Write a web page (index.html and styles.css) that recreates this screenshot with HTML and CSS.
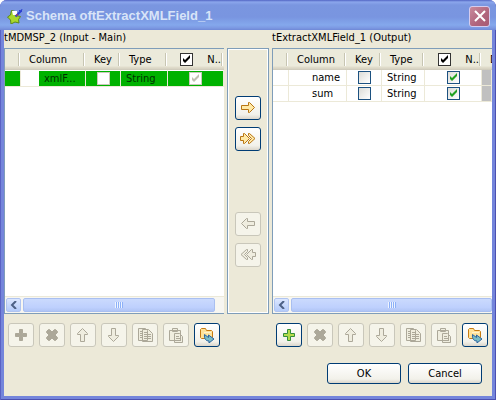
FILE: index.html
```html
<!DOCTYPE html>
<html lang="en">
<head>
<meta charset="utf-8">
<title>Schema oftExtractXMLField_1</title>
<link rel="stylesheet" href="styles.css">
</head>
<body>
<svg class="defs" aria-hidden="true">
  <symbol id="tick" viewBox="0 0 13 13"><path d="M3 5l2 2 5-5v3L5 10 3 8z"/></symbol>
  <symbol id="plus" viewBox="0 0 14 14"><path d="M5.500 1.500h3v4h4v3h-4v4h-3v-4h-4v-3h4z"/></symbol>
  <symbol id="cross" viewBox="0 0 14 14"><path d="M1.500 3.500l2-2h1l2.500 2.500 2.500-2.500h1l2 2v1l-2.500 2.500 2.500 2.500v1l-2 2h-1l-2.500-2.500-2.500 2.500h-1l-2-2v-1l2.500-2.500-2.500-2.500z"/></symbol>
  <symbol id="right" viewBox="0 0 16 14"><path d="M1.500 4.500h7v-3h1l5 5-5 5h-1v-3h-7z"/></symbol>
  <symbol id="double" viewBox="0 0 16 14"><path d="M8.500 1.500h1l5.500 5-5.500 5h-1v-2l3-3-3-3z M.5 4.500h3v-3h1l5 5-5 5h-1v-3h-3z"/></symbol>
  <symbol id="up" viewBox="0 0 14 16"><path d="M4.500 14.500v-7h-3v-1l5-5 5 5v1h-3v7z"/></symbol>
  <symbol id="copy" viewBox="0 0 16 16"><path class="sheet" d="M1.500 1.500h7l2 2v10h-9z M5.500 2.500h6l4 4v8h-10z"/><path class="rule" d="M7 5.500h4M7 7.500h7M7 9.500h7M7 11.500h7M3 4.500h2M3 6.500h2M3 8.500h2M3 10.500h2"/></symbol>
  <symbol id="paste" viewBox="0 0 16 16"><path class="sheet" d="M1.500 3.500h11v10h-11z M4.500 1.500h5v3h-5z M6.500 6.500h5l3 3v6h-8z"/><path class="rule" d="M8 9.500h3M8 11.500h5M8 13.500h5"/></symbol>
  <symbol id="folder" viewBox="0 0 16 16"><path d="M1.500 10.500v-8l1-1h4l1 2h5l1 1v6l-1 1h-10z" fill="#ffe39a" stroke="#c77b12"/><path d="M5 5.500h7" stroke="#fff4cf"/><path d="M5.500 7.500l4 3V8l5.500 4-5 4v-2c-3 0-5-2-4.500-6.500z" fill="#79bcc5" stroke="#2b65a0"/></symbol>
</svg>
<main class="window">
  <header class="titlebar">
    <svg class="logo" viewBox="0 0 16 16" aria-hidden="true"><path d="M4.500 2.500l4 1v4l5 1-2 3 .5 3.500-4-1-4 2-.5-4-3-3 3-2z" fill="#a9d82c" stroke="#5c8a18"/><path d="M5 3h5v4H6z" fill="#fff"/><path d="M8.500 8.500l6-6" stroke="#2b3fd0" stroke-width="2"/><path d="M12 2l2 2 1-3" stroke="#2b3fd0"/><path d="M9 7h2" stroke="#d8402a"/></svg>
    <h1>Schema oftExtractXMLField_1</h1>
    <button class="close" aria-label="Close"><svg viewBox="0 0 12 12"><path d="M1 1l10 10M11 1L1 11"/></svg></button>
  </header>
  <div class="content">
    <div class="panes">
      <section class="pane">
        <h2>tMDMSP_2 (Input - Main)</h2>
        <div class="grid">
          <table class="input">
            <colgroup><col class="c-gap"><col class="c-name"><col class="c-key"><col class="c-type"><col class="c-null"></colgroup>
            <thead><tr><th></th><th>Column</th><th>Key</th><th>Type</th><th><span class="nullable"><label class="check plain"><input type="checkbox" checked aria-label="Nullable for all"><svg><use href="#tick"/></svg></label>N..</span></th></tr></thead>
            <tbody><tr><td></td><td class="name swatch">xmlF...</td><td><label class="check off"><input type="checkbox" disabled aria-label="Key"></label></td><td class="type">String</td><td><label class="check off"><input type="checkbox" checked disabled aria-label="Nullable"><svg><use href="#tick"/></svg></label></td></tr></tbody>
          </table>
          <div class="scroll"><button aria-label="Scroll left"><svg viewBox="0 0 8 8"><path d="M6 0L2 4l4 4"/></svg></button><div class="thumb"><i></i></div><div class="track"></div></div>
        </div>
      </section>
      <div class="transfer">
        <button class="tool" aria-label="Copy to output"><svg class="gold wide"><use href="#right"/></svg></button>
        <button class="tool" aria-label="Copy all to output"><svg class="gold wide"><use href="#double"/></svg></button>
        <button class="tool back" disabled aria-label="Copy to input"><svg class="wide flip"><use href="#right"/></svg></button>
        <button class="tool" disabled aria-label="Copy all to input"><svg class="wide flip"><use href="#double"/></svg></button>
      </div>
      <section class="pane">
        <h2>tExtractXMLField_1 (Output)</h2>
        <div class="grid">
          <table class="output">
            <colgroup><col class="c-gap"><col class="c-name"><col class="c-key"><col class="c-type"><col class="c-null"><col></colgroup>
            <thead><tr><th></th><th>Column</th><th>Key</th><th>Type</th><th><span class="nullable"><label class="check plain"><input type="checkbox" checked aria-label="Nullable for all"><svg><use href="#tick"/></svg></label>N..</span></th><th>D</th></tr></thead>
            <tbody>
              <tr><td></td><td class="name">name</td><td><label class="check"><input type="checkbox" aria-label="Key name"></label></td><td class="type">String</td><td><label class="check"><input type="checkbox" checked aria-label="Nullable name"><svg><use href="#tick"/></svg></label></td><td class="grey"></td></tr>
              <tr><td></td><td class="name">sum</td><td><label class="check"><input type="checkbox" aria-label="Key sum"></label></td><td class="type">String</td><td><label class="check"><input type="checkbox" checked aria-label="Nullable sum"><svg><use href="#tick"/></svg></label></td><td class="grey"></td></tr>
            </tbody>
          </table>
          <div class="scroll"><button aria-label="Scroll left"><svg viewBox="0 0 8 8"><path d="M6 0L2 4l4 4"/></svg></button><div class="thumb"><i></i></div></div>
        </div>
      </section>
    </div>
    <div class="toolbars">
      <div class="toolbar">
        <button class="tool" disabled aria-label="Add"><svg class="solid"><use href="#plus"/></svg></button>
        <button class="tool" disabled aria-label="Remove"><svg class="solid"><use href="#cross"/></svg></button>
        <button class="tool" disabled aria-label="Move up"><svg class="tall"><use href="#up"/></svg></button>
        <button class="tool" disabled aria-label="Move down"><svg class="tall down"><use href="#up"/></svg></button>
        <button class="tool" disabled aria-label="Copy"><svg class="big"><use href="#copy"/></svg></button>
        <button class="tool" disabled aria-label="Paste"><svg class="big"><use href="#paste"/></svg></button>
        <button class="tool" aria-label="Import"><svg class="big"><use href="#folder"/></svg></button>
      </div>
      <div class="toolbar">
        <button class="tool" aria-label="Add"><svg class="green"><use href="#plus"/></svg></button>
        <button class="tool" disabled aria-label="Remove"><svg class="solid"><use href="#cross"/></svg></button>
        <button class="tool" disabled aria-label="Move up"><svg class="tall"><use href="#up"/></svg></button>
        <button class="tool" disabled aria-label="Move down"><svg class="tall down"><use href="#up"/></svg></button>
        <button class="tool" disabled aria-label="Copy"><svg class="big"><use href="#copy"/></svg></button>
        <button class="tool" disabled aria-label="Paste"><svg class="big"><use href="#paste"/></svg></button>
        <button class="tool" aria-label="Import"><svg class="big"><use href="#folder"/></svg></button>
      </div>
    </div>
    <footer><button class="action">OK</button><button class="action">Cancel</button></footer>
  </div>
</main>
</body>
</html>
```
FILE: styles.css
```css
* { box-sizing: border-box; }
body { margin: 0; background: #fff; color: #000; font: 11px/14px "DejaVu Sans Condensed", "Noto Sans", sans-serif; }
button { font: inherit; color: inherit; padding: 0; }
svg { display: block; }
.defs { display: none; }
.window { min-height: 100vh; display: flex; flex-direction: column; background: #7485db; border-radius: 7px 7px 0 0; box-shadow: inset 1px 0 #5a62c4, inset -1px -1px #4c50b0; overflow: hidden; }

.titlebar { height: 30px; flex: none; display: flex; align-items: center; gap: 3px; padding: 2px 6px 0 7px; background: linear-gradient(#5265c4 0, #8ba6ec 2px, #7a96e0 5px, #7995e0 17px, #84a8ec 25px, #7c98e2 28px, #6f88d6 30px); }
.titlebar h1 { flex: 1; margin: 0; font: bold 13px/18px "Liberation Sans", sans-serif; color: #d8e4f8; }
.logo { width: 16px; height: 16px; fill: none; }
.close { width: 21px; height: 21px; display: grid; place-items: center; border: 1px solid #d5ccee; border-radius: 3px; background: linear-gradient(135deg, #c98a9c, #b0647c 60%, #a85a74); }
.close svg { width: 12px; height: 12px; stroke: #fff; stroke-width: 2; }

.content { flex: 1; margin: 0 4px 4px; background: #ece9d8; display: flex; flex-direction: column; }
.panes { display: grid; grid-template-columns: 1fr 42px 1fr; column-gap: 3px; }
.pane { min-width: 0; display: flex; flex-direction: column; }
.pane h2 { margin: 0; height: 18px; font: inherit; line-height: 16px; white-space: nowrap; }
.grid { height: 266px; display: flex; flex-direction: column; justify-content: space-between; background: #fff; border: 1px solid #7f9db9; border-right: 0; overflow: hidden; }
table { width: 100%; table-layout: fixed; border-collapse: separate; border-spacing: 0; }
th, td { padding: 0; font-weight: normal; white-space: nowrap; overflow: hidden; }
th { height: 21px; padding-left: 8px; text-align: left; background: linear-gradient(#ebeadb 17px, #e2decd 18px, #d6d2c2 20px, #cbc7b8); position: relative; }
th:not(:last-child)::after, .input th:last-child::after { content: ""; position: absolute; right: 1px; top: 4px; width: 2px; height: 13px; background: linear-gradient(90deg, #c7c5b2 50%, #fff 50%); }
td { height: 16px; border-right: 1px solid #ece9d8; border-bottom: 1px solid #ece9d8; }
.c-gap { width: 16px; }
.c-name { width: 65px; }
.c-key { width: 35px; }
.c-type { width: 47px; }
.output .c-name { width: 58px; }
.output .c-type { width: 43px; }
.output .c-null { width: 57px; }
.input td { height: 17px; border-top: 1px solid #fff; background: #00b200; background-clip: padding-box; color: #003000; }
.input .swatch { background: linear-gradient(90deg, #fff 18px, #00b200 18px); background-clip: padding-box; }
.name { padding-left: 23px; }
.type { padding-left: 5px; }
.nullable { display: flex; align-items: center; justify-content: flex-end; gap: 14px; padding-right: 3px; }
.check { position: relative; display: block; width: 13px; height: 13px; margin: 0 auto; fill: #21a121; }
.check input { appearance: none; display: block; width: 13px; height: 13px; margin: 0; border: 1px solid #1c5180; background: linear-gradient(135deg, #dcdcd7, #fff); }
.check svg { position: absolute; inset: 0; width: 13px; height: 13px; pointer-events: none; }
.check.plain { margin: 0; fill: #000; }
.check.plain input { border-color: #333; background: #fff; }
.check.off { fill: #c0bfb2; }
.check.off input { border-color: #cac8bb; background: #fff; }
.grey { background: #c0c0c0; }

.scroll { height: 17px; display: flex; gap: 2px; padding: 1px 0 1px 1px; border-top: 1px solid #ece9d8; background: #f7f6f1; }
.scroll button { width: 15px; display: grid; place-items: center; border: 1px solid #b0c4f0; border-radius: 2px; background: linear-gradient(#dce7ff, #b4cbfa); }
.scroll button svg { width: 8px; height: 8px; fill: none; stroke: #4d6185; stroke-width: 2; }
.thumb { flex: 1; display: grid; place-items: center; border: 1px solid #a9bff0; border-radius: 2px; background: linear-gradient(#cbdafd, #bed0fd 70%, #b1c5f5); }
.thumb i { width: 8px; height: 6px; background: repeating-linear-gradient(90deg, #eef4fe 0 1px, #8cb0f8 1px 2px); }
.track { width: 7px; }

.transfer { margin-top: 18px; border: 1px solid #7f9db9; box-shadow: inset 0 0 0 1px #fff; display: flex; flex-direction: column; align-items: center; gap: 7px; padding-top: 47px; }
.back { margin-top: 54px; }
.tool { width: 26px; height: 24px; display: grid; place-items: center; border: 1px solid #003c74; border-radius: 3px; background: linear-gradient(#fff, #f2f1ea 80%, #dbd6cb); }
.tool:disabled { border-color: #c9c7ba; background: #f5f4ea; }
.tool svg { width: 14px; height: 14px; fill: #efeddf; stroke: #aca899; }
.tool .wide { width: 16px; height: 14px; }
.tool .tall { width: 14px; height: 16px; }
.tool .big { width: 16px; height: 16px; }
.tool .solid { fill: #aca899; }
.tool .gold { fill: #ffe9a6; stroke: #b87512; }
.tool .green { fill: #b5db4b; stroke: #338e3a; }
.flip { transform: scaleX(-1); }
.down { transform: scaleY(-1); }
.rule { fill: none; }

.toolbars { display: grid; grid-template-columns: 1fr 1fr; column-gap: 52px; padding: 9px 0 0 4px; }
.toolbar { display: flex; gap: 5px; }
footer { display: flex; justify-content: flex-end; gap: 7px; padding: 16px 10px 0 0; }
.action { width: 74px; height: 21px; border: 1px solid #003c74; border-radius: 3px; background: linear-gradient(#fff, #f2f1ea 80%, #dbd6cb); }
```
